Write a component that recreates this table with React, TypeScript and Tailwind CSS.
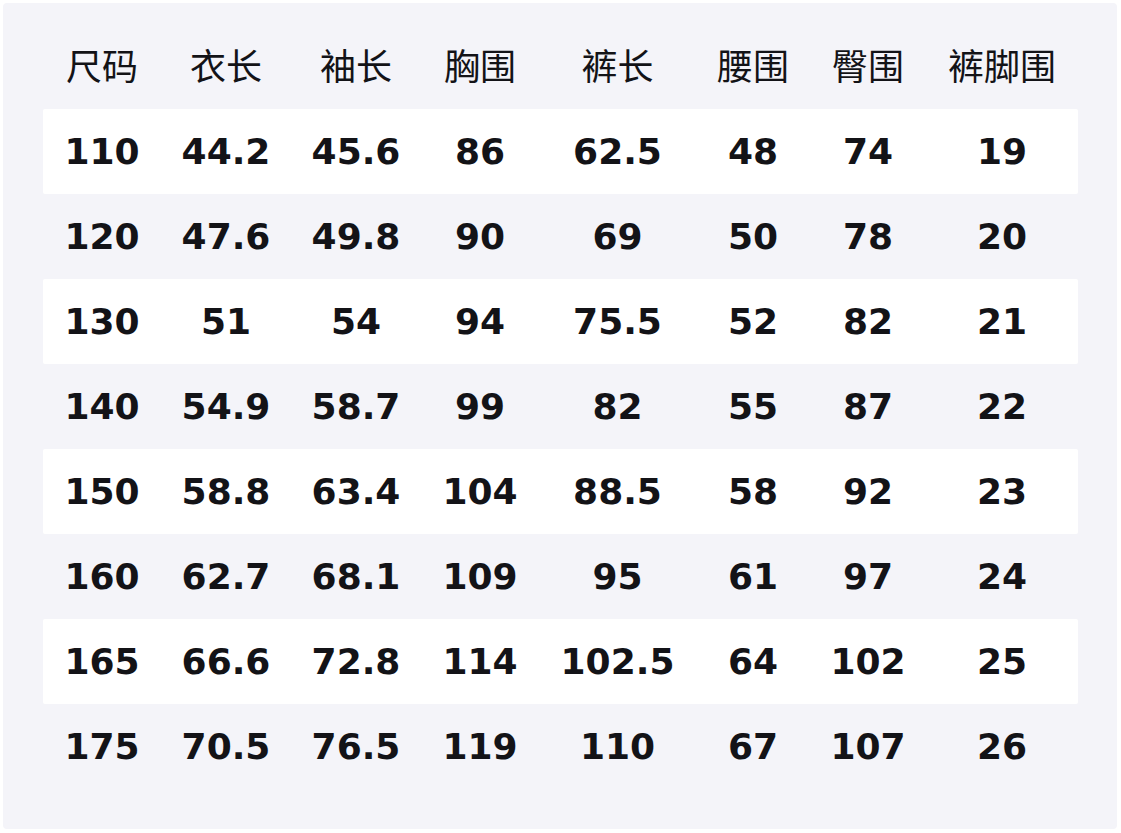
const headers = ['尺码', '衣长', '袖长', '胸围', '裤长', '腰围', '臀围', '裤脚围'];

const rows: string[][] = [
  ['110', '44.2', '45.6', '86', '62.5', '48', '74', '19'],
  ['120', '47.6', '49.8', '90', '69', '50', '78', '20'],
  ['130', '51', '54', '94', '75.5', '52', '82', '21'],
  ['140', '54.9', '58.7', '99', '82', '55', '87', '22'],
  ['150', '58.8', '63.4', '104', '88.5', '58', '92', '23'],
  ['160', '62.7', '68.1', '109', '95', '61', '97', '24'],
  ['165', '66.6', '72.8', '114', '102.5', '64', '102', '25'],
  ['175', '70.5', '76.5', '119', '110', '67', '107', '26'],
];

const cols = 'grid w-[1035px] grid-cols-[118px_130px_130px_118px_157px_114px_116px_152px]';

export default function App() {
  return (
    <div className="w-[1121px] h-[833px] bg-white p-[3px] text-[#131317] font-['DejaVu_Sans','Noto_Sans_CJK_SC',sans-serif]">
      <div className="w-[1114px] h-[826px] rounded-[4px] bg-[#f4f4f9] pt-[21px] pl-[40px]">
        <div className={`${cols} h-[85px] pb-[6px] items-center text-center text-[36px] font-normal font-['Noto_Sans_CJK_SC',sans-serif]`}>
          {headers.map((h) => (
            <div key={h} className="leading-none">{h}</div>
          ))}
        </div>
        {rows.map((r, i) => (
          <div
            key={r[0]}
            className={`${cols} h-[85px] items-center text-center text-[36px] font-bold rounded-[2px] ${i % 2 === 0 ? 'bg-white' : ''}`}
          >
            {r.map((c, j) => (
              <div key={j} className="leading-none">{c}</div>
            ))}
          </div>
        ))}
      </div>
    </div>
  );
}
